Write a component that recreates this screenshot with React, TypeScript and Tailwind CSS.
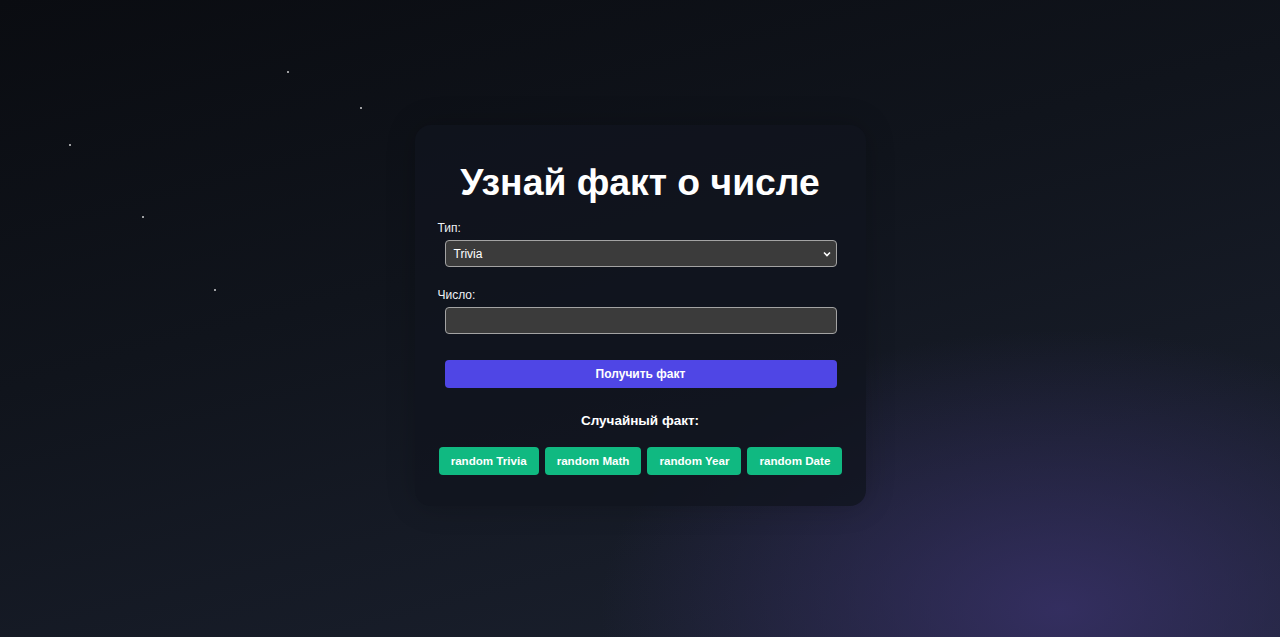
import React from "react";

const stars = [
  [288, 72],
  [361, 108],
  [70, 145],
  [143, 217],
  [215, 290],
];

export default function App() {
  return (
    <div
      className="relative w-full h-[637px] overflow-hidden flex items-center justify-center bg-[radial-gradient(ellipse_460px_280px_at_1060px_610px,rgba(58,50,108,0.8),rgba(58,50,108,0)_100%),linear-gradient(165deg,#0a0c11_0%,#10141c_40%,#1c2231_100%)]"
      style={{ fontFamily: '"Liberation Sans", Arial, sans-serif' }}
    >
      {stars.map(([x, y], i) => (
        <span
          key={i}
          className="absolute w-[2px] h-[2px] rounded-full bg-white/80"
          style={{ left: x - 1, top: y - 1 }}
        />
      ))}
      <div className="relative w-[451px] h-[381px] mt-[-6px] rounded-[16px] bg-[#10141e]/80 shadow-[0_0_30px_rgba(0,0,0,0.2)] px-[23px] pt-[37px]">
        <h1 className="text-center text-white font-bold text-[37.3px] leading-[41px] whitespace-nowrap">
          Узнай факт о числе
        </h1>
        <label className="block mt-[18px] text-[12px] leading-[14px] text-[#eef2f6]">
          Тип:
        </label>
        <div className="relative mt-[5px] ml-[7px] mr-[6px] h-[27px] rounded-[4px] border border-[#a3a3a3] bg-[#3b3b3b] flex items-center pl-[8px] text-[12px] text-white">
          Trivia
          <svg
            className="absolute right-[5px] top-[10px]"
            width="8"
            height="6"
            viewBox="0 0 8 6"
          >
            <path d="M1 1.5 L4 4.5 L7 1.5" fill="none" stroke="#ffffff" strokeWidth="1.6" />
          </svg>
        </div>
        <label className="block mt-[21px] text-[12px] leading-[14px] text-[#eef2f6]">
          Число:
        </label>
        <div className="mt-[5px] ml-[7px] mr-[6px] h-[27px] rounded-[4px] border border-[#a3a3a3] bg-[#3b3b3b]" />
        <button className="block mt-[26px] ml-[7px] w-[392px] h-[28px] rounded-[4px] bg-[#4f46e5] text-white font-bold text-[12px]">
          Получить факт
        </button>
        <h3 className="mt-[24px] text-center text-white font-bold text-[13.5px] leading-[17px]">
          Случайный факт:
        </h3>
        <div className="mt-[18px] flex justify-center gap-[6px] pl-[1px]">
          {["random Trivia", "random Math", "random Year", "random Date"].map((t) => (
            <button
              key={t}
              className="shrink-0 whitespace-nowrap h-[28px] px-[12px] rounded-[4px] bg-[#10b981] text-white font-bold text-[11.6px]"
            >
              {t}
            </button>
          ))}
        </div>
      </div>
    </div>
  );
}
